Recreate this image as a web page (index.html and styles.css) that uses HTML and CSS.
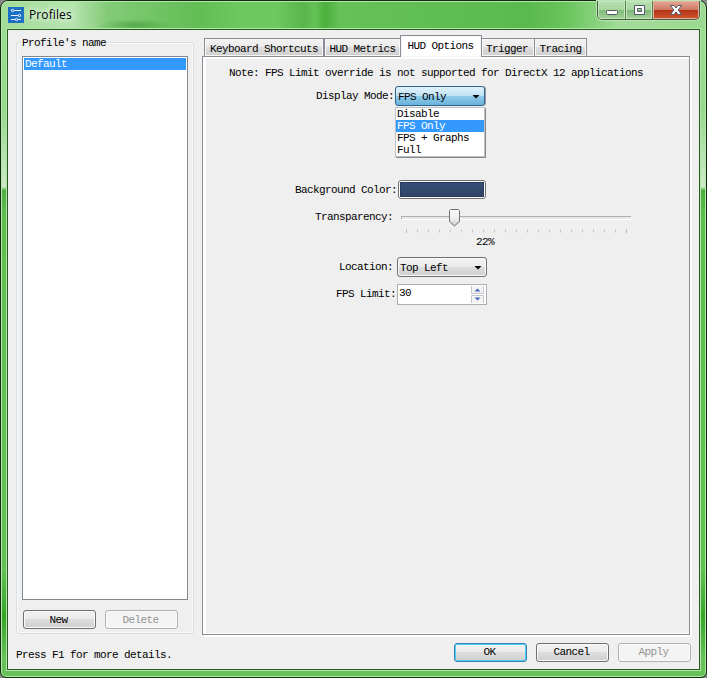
FILE: index.html
```html
<!DOCTYPE html>
<html lang="en">
<head>
<meta charset="utf-8">
<title>Profiles</title>
<link rel="stylesheet" href="styles.css">
</head>
<body>
<div class="window">
  <header class="titlebar">
    <svg class="app-icon" width="16" height="16" viewBox="0 0 16 16"><rect width="16" height="16" fill="#1b6fc2"/><g stroke="#e8f3ff" stroke-width="1" fill="#1b6fc2"><path d="M3 3.500h10M3 8.500h10M3 12.500h10"/><circle cx="4.500" cy="3.500" r="1.200"/><circle cx="11.500" cy="8.500" r="1.200"/><circle cx="8.500" cy="12.500" r="1.200"/></g></svg>
    <h1>Profiles</h1>
    <div class="caption-buttons">
      <span class="cap min"><svg width="14" height="12"><rect x="1.500" y="6.500" width="11" height="4" rx="1" fill="#fff" stroke="#535666"/></svg></span>
      <span class="cap max"><svg width="13" height="12"><path d="M1.500 1.500h10v9h-10zM4.500 4.500v3h4v-3z" fill="#fff" fill-rule="evenodd" stroke="#535666"/></svg></span>
      <span class="cap close"><svg width="14" height="12"><path d="M1.500 1.500h3.500l2 2.500 2-2.500h3.500L9.200 6l3.300 4.500H9L7 8l-2 2.500H1.500L4.800 6z" fill="#fff" stroke="#535666"/></svg></span>
    </div>
  </header>
  <main class="client">
    <div class="columns">
      <section class="profiles">
        <h2>Profile's name</h2>
        <ul class="list"><li>Default</li></ul>
        <div class="profile-actions"><button>New</button><button disabled>Delete</button></div>
      </section>
      <section class="settings">
        <nav class="tabs"><span class="tab t1">Keyboard Shortcuts</span><span class="tab t2">HUD Metrics</span><span class="tab active">HUD Options</span><span class="tab t4">Trigger</span><span class="tab t5">Tracing</span></nav>
        <div class="panel">
          <p class="note">Note: FPS Limit override is not supported for DirectX 12 applications</p>
          <div class="row mode"><label>Display Mode:</label>
            <div class="combo open"><span>FPS Only</span><i class="arrow"></i>
              <ul class="menu"><li>Disable</li><li class="selected">FPS Only</li><li>FPS + Graphs</li><li>Full</li></ul>
            </div>
          </div>
          <div class="row color"><label>Background Color:</label><div class="swatch"><i></i></div></div>
          <div class="row transparency"><label>Transparency:</label>
            <div class="slider">
              <svg width="232" height="29" viewBox="0 0 232 29"><path d="M0 8.500h230" stroke="#afafaf"/><path d="M.5 9v2" stroke="#afafaf"/><path d="M1 9.500h229M1 10.500h229" stroke="#e7eaea"/><path d="M1 11.500h230" stroke="#fff"/><path class="ticks" d="M5 23h221"/><path d="M5.500 21v4M225.500 21v4" stroke="#c0c0c0"/><defs><linearGradient id="thumb" x2="0" y2="1"><stop stop-color="#fafafa"/><stop offset=".5" stop-color="#f0f0f0"/><stop offset="1" stop-color="#cfcfcf"/></linearGradient></defs><path d="M49.500 1.500h8l1 1v11l-5 4.500-5-4.500v-11z" fill="url(#thumb)" stroke="#707070"/></svg>
              <output>22%</output>
            </div>
          </div>
          <div class="row location"><label>Location:</label><div class="combo"><span>Top Left</span><i class="arrow"></i></div></div>
          <div class="row limit"><label>FPS Limit:</label><div class="spin"><span>30</span><svg width="14" height="17"><path d="M.5 0v7.500h12V0M.5 17V9.500h12V17" fill="#f4f4f4" stroke="#c2c5ca"/><path d="M3.500 5.500h6l-3-3z" fill="#4a66bd"/><path d="M3.500 11.500h6l-3 3z" fill="#4a66bd"/></svg></div></div>
        </div>
      </section>
    </div>
    <footer class="footer"><p>Press F1 for more details.</p><button class="default">OK</button><button>Cancel</button><button disabled>Apply</button></footer>
  </main>
</div>
</body>
</html>
```
FILE: styles.css
```css
* { box-sizing: border-box; margin: 0; padding: 0; }
body { width: 707px; height: 678px; overflow: hidden; background: #888; color: #000; font: 11px/12px "Liberation Mono", monospace; letter-spacing: -0.6px; white-space: nowrap; }
.window { width: 707px; height: 678px; display: flex; flex-direction: column; padding: 0 6px 7px 6px; border: 1px solid #122a0e; border-radius: 8px 8px 6px 6px; box-shadow: inset 0 0 0 1px #b5e7ac; background: linear-gradient(#9edc94, #96d88d 16%, #cdebc8 27.500%, #4fae42 28%, #5ebf4f 32%, #62c153 84%, #35a628 91%, #65c158 97%); }
.titlebar { height: 28px; margin: 0 -5px; display: flex; flex: none; align-items: flex-start; padding: 5px 0 0 6px; border-top: 1px solid #b5e7ac; border-radius: 6px 6px 0 0; background: radial-gradient(ellipse 38px 6px at 133px 23px, #459b39aa, #459b3900), linear-gradient(90deg, #a2db98, #b6e5af 10%, #83cb78 15%, #62bd54 28%, #6dc860 34%, #6dc860 39%, #58b64b 43%, #64c256 44.500%, #4bb13c 46%, #64c256 48%, #5bba4d 75%, #68c45b 80%, #a2dc99 88%, #9ad98f); }
.app-icon { display: block; }
h1 { font: 12px/16px "Open Sans", sans-serif; letter-spacing: 0.1px; margin-left: 5px; text-shadow: 0 0 6px #fff, 0 0 9px #fff; }
.caption-buttons { display: flex; height: 19px; margin: -6px 5px 0 auto; border: 1px solid #425c3d; border-top: 0; border-radius: 0 0 5px 5px; box-shadow: 0 0 0 1px #b9e5b2; overflow: hidden; }
.cap { display: flex; align-items: center; justify-content: center; background: linear-gradient(#b9dfb3, #a6d69e 48%, #7fb877 50%, #9fd396); border-right: 1px solid #57804f; box-shadow: inset 0 0 0 1px #c6e6c0; }
.min { width: 28px; } .max { width: 27px; }
.close { width: 46px; border: 0; background: linear-gradient(#e4a897, #cf7a63 48%, #b23416 50%, #d2552f); box-shadow: inset 0 0 0 1px #e5b09f; }
.client { flex: 1; min-height: 0; background: #efefef; border: 1px solid #255a1d; box-shadow: 0 0 0 1px #b5e7ac; padding: 5px 7px 0 8px; display: flex; flex-direction: column; }
.columns { display: flex; gap: 8px; height: 600px; flex: none; }
.profiles { width: 178px; margin-top: 7px; height: 592px; border: 1px solid #d5dfe5; border-radius: 3px; box-shadow: inset 0 0 0 1px #fafafa; padding: 0 5px; }
h2 { font: inherit; display: block; width: fit-content; background: #efefef; margin-top: -7px; height: 14px; line-height: 14px; padding-right: 1px; }
.list { height: 544px; margin-top: 6px; list-style: none; background: #fff; border: 1px solid #828790; padding: 1px; }
.list li { height: 12px; background: #3399ff; color: #fff; padding-left: 1px; }
.profile-actions { display: flex; gap: 9px; margin: 10px 0 0 1px; }
button { width: 73px; height: 19px; border: 1px solid #707070; border-radius: 3px; background: linear-gradient(#f2f2f2, #ebebeb 48%, #dddddd 50%, #cfcfcf); box-shadow: inset 0 0 0 1px #fafafa; font: inherit; letter-spacing: inherit; color: #000; padding-right: 2px; }
button:disabled { color: #949494; background: #f4f4f4; border-color: #adb2b5; }
button.default { border-color: #3c7fb1; box-shadow: inset 0 0 0 1px #48d1f5; }
.settings { width: 488px; }
.tabs { display: flex; align-items: flex-end; height: 21px; padding-left: 2px; position: relative; z-index: 1; }
.tab { height: 18px; border: 1px solid #898c95; border-bottom: 0; background: linear-gradient(#f2f2f2, #ebebeb 48%, #dddddd 50%, #cfcfcf); box-shadow: inset 0 0 0 1px #f7f7f7; line-height: 20px; text-align: center; }
.t1 { width: 120px; } .t2 { width: 76px; border-right: 0; } .t4 { width: 53px; border-left: 0; padding-right: 2px; } .t5 { width: 53px; margin-left: -1px; }
.tab.active { width: 82px; height: 22px; margin-bottom: -1px; background: #fff; padding-right: 1px; }
.panel { height: 579px; border: 1px solid #898c95; background: #efefef; box-shadow: inset 3px 2px #fff, inset 0 -1px #fff, 2px 2px #fff; padding-top: 9px; }
.note { height: 14px; line-height: 14px; padding-left: 26px; }
.row { display: flex; align-items: flex-start; }
label { flex: none; text-align: right; padding: 4px 1px 0 0; }
.mode { margin-top: 6px; height: 94px; }
.mode label { width: 192px; }
.combo { width: 90px; height: 20px; display: flex; align-items: center; justify-content: space-between; padding: 1px 4px 0 2px; border: 1px solid #707070; border-radius: 3px; background: linear-gradient(#f2f2f2, #ebebeb 48%, #dddddd 50%, #cfcfcf); box-shadow: inset 0 0 0 1px #fafafa; }
.combo.open { position: relative; border-color: #2c628b; background: linear-gradient(#e1f2fb, #bfe3f6 48%, #91cbeb 50%, #68b3db); box-shadow: 1px 0 #9a9a9a; }
.arrow { width: 8px; height: 4px; background: #000; clip-path: polygon(0 0, 100% 0, 50% 100%); }
.menu { position: absolute; z-index: 2; left: -1px; top: 20px; width: 90px; height: 50px; list-style: none; background: #fff; border: 1px solid #bbc0ca; box-shadow: 1px 1px #888; }
.menu li { height: 12px; padding-left: 1px; }
.selected { background: #3399ff; color: #fff; }
.color { height: 28px; }
.color label { width: 195px; }
.swatch { width: 88px; height: 19px; border: 1px solid #707070; border-radius: 3px; background: #fafafa; padding: 1px; }
.swatch i { display: block; height: 15px; background: linear-gradient(#364e78, #304463); border: 1px solid #263c5d; }
.transparency { height: 49px; }
.transparency label { width: 191px; padding-top: 3px; }
.slider { margin-left: 7px; }
.slider svg { display: block; }
.ticks { stroke: #c4c4c4; stroke-width: 3; stroke-dasharray: 1 10; }
output { display: block; margin: -1px 0 0 75px; }
.location { height: 27px; }
.location label { width: 191px; }
.location .combo { margin-left: 3px; }
.limit label { width: 194px; }
.spin { width: 90px; height: 21px; border: 1px solid #abadb3; background: #fff; display: flex; justify-content: space-between; padding: 1px; }
.spin span { margin-top: 1px; }
.footer { display: flex; align-items: center; margin-top: 7px; height: 20px; }
.footer p { width: 438px; padding-top: 6px; }
.footer button { margin-right: 9px; flex: none; }
.footer button:last-child { margin-right: 0; }
```
